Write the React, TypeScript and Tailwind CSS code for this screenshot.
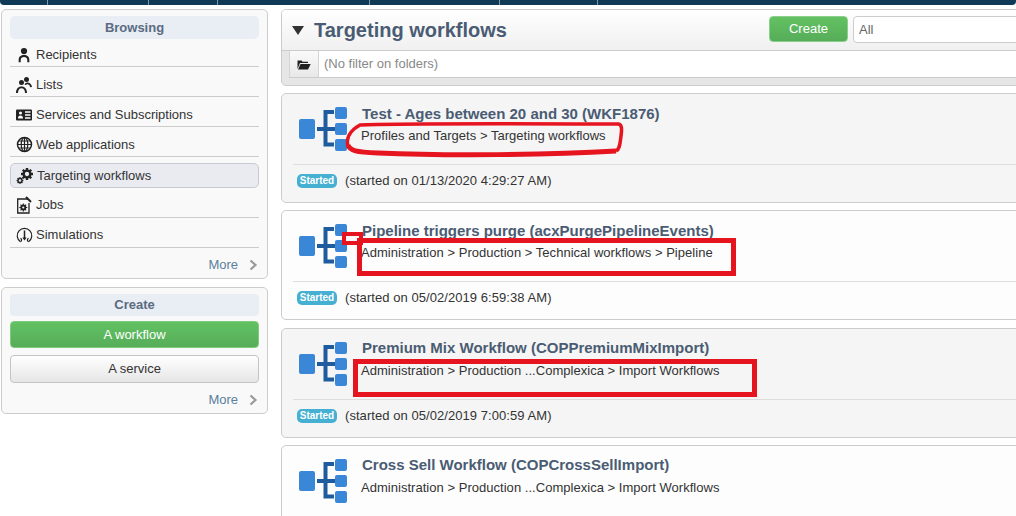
import React from "react";

const font = { fontFamily: '"Liberation Sans", Arial, sans-serif' };

function Person() {
  return (
    <svg width="16" height="17" viewBox="0 0 18 18" fill="#222">
      <circle cx="9" cy="4" r="3.500" />
      <path d="M3 16.500v-2.500C3 10.200 5.500 8.500 9 8.500s6 1.700 6 5.500v2.500h-2.300v-2.500C12.700 11.800 11 10.800 9 10.800s-3.700 1-3.700 3.200v2.500z" />
    </svg>
  );
}
function People() {
  return (
    <svg width="19" height="18" viewBox="0 0 19 18" fill="#222">
      <circle cx="11.500" cy="3.500" r="2.500" />
      <circle cx="6.500" cy="6.500" r="2.500" />
      <path d="M1 17c0-4 2.200-6.500 5.500-6.500S12 13 12 17h-2c0-2.700-1.300-4.700-3.500-4.700S3 14.300 3 17z" />
      <path d="M9.500 8.500c.6-1.300 1.500-2 3-2s3.800 1 4.500 4.500l-1.800.3c-.4-1.800-1.300-3-2.700-3-.7 0-1.300.2-1.600.7z" />
    </svg>
  );
}
function IdCard() {
  return (
    <svg width="18" height="14" viewBox="0 0 18 14">
      <rect x="1" y="1.500" width="16" height="11" rx="1" fill="#222" />
      <circle cx="5.500" cy="5" r="1.500" fill="#fff" />
      <path d="M3 10.500c0-2.200 1-3 2.500-3s2.500.8 2.500 3z" fill="#fff" />
      <path d="M10 4h5.500M10 7h5.500M10 10h5.500" stroke="#fff" strokeWidth="1.300" />
    </svg>
  );
}
function Globe() {
  return (
    <svg width="17" height="17" viewBox="0 0 17 17" fill="none" stroke="#222" strokeWidth="1.200">
      <circle cx="8.500" cy="8.500" r="7" strokeWidth="1.500" />
      <ellipse cx="8.500" cy="8.500" rx="3.300" ry="7" />
      <path d="M8.500 1.500v14M1.500 8.500h14M2.500 5h12M2.500 12h12" />
    </svg>
  );
}
function Gear({ size, cx, cy }: { size: number; cx: number; cy: number }) {
  const teeth = [0, 45, 90, 135];
  return (
    <g transform={`translate(${cx} ${cy})`}>
      {teeth.map((t) => (
        <rect key={t} x={-size * 0.2} y={-size} width={size * 0.4} height={size * 2} fill="#222" transform={`rotate(${t})`} />
      ))}
      <circle r={size * 0.76} fill="#222" />
      <circle r={size * 0.36} fill="#eceef3" />
    </g>
  );
}
function Gears() {
  return (
    <svg width="18" height="18" viewBox="0 0 18 18">
      <Gear size={6} cx={11} cy={7} />
      <Gear size={3.400} cx={4} cy={13.500} />
    </svg>
  );
}
function Doc() {
  return (
    <svg width="16" height="18" viewBox="0 0 16 18" fill="none">
      <path d="M12 3H1.700v14h11.300V7" stroke="#222" strokeWidth="1.300" />
      <path d="M10 1l5 5" stroke="#222" strokeWidth="2" />
      <g transform="translate(7.300 11.500)">
        <circle r="3" fill="#222" />
        <path d="M0-4v8M-4 0h8M-2.800-2.800l5.600 5.600M-2.800 2.800l5.600-5.600" stroke="#222" strokeWidth="1.100" />
        <circle r="1.100" fill="#f8f8f8" />
      </g>
    </svg>
  );
}
function Sim() {
  return (
    <svg width="17" height="18" viewBox="0 0 17 18" fill="none" stroke="#222" strokeWidth="1.200">
      <path d="M4.500 15.700A7.300 7.300 0 1 1 12.500 15.700" />
      <path d="M4.500 15.700c1.500-.7 1.500-2.500 0-3.500M12.500 15.700c-1.500-.7-1.500-2.500 0-3.500" />
      <path d="M8.500 4.500v8.500" strokeWidth="1.500" />
      <path d="M6.300 11.500h4.400L8.500 14.500z" fill="#222" stroke="none" />
    </svg>
  );
}
function Chevron() {
  return (
    <svg width="9" height="12" viewBox="0 0 9 12" fill="none" stroke="#999" strokeWidth="2.200">
      <path d="M1.500 1.500 6.500 6l-5 4.500" />
    </svg>
  );
}
function Folder() {
  return (
    <svg width="14" height="11" viewBox="0 0 14 11" fill="#222">
      <path d="M.5 10V1.500h4l1 1.200H11V4H3L.5 10z" />
      <path d="M3.500 5H13.700L11 10.500H1z" />
    </svg>
  );
}
function WorkflowIcon() {
  return (
    <svg width="50" height="46" viewBox="0 0 50 46" className="shrink-0">
      <rect x="1" y="12" width="16" height="20" rx="2" fill="#3987d6" />
      <rect x="37" y="0" width="12" height="12" rx="2" fill="#3987d6" />
      <rect x="37" y="16" width="12" height="12" rx="2" fill="#3987d6" />
      <rect x="37" y="32" width="12" height="12" rx="2" fill="#3987d6" />
      <path d="M36 5H27.500V37.500H36M19 22H37" fill="none" stroke="#1f5c9e" strokeWidth="4" />
    </svg>
  );
}

function NavRow({ icon, label, first, low }: { icon: React.ReactNode; label: string; first?: boolean; low?: boolean }) {
  return (
    <div className={first ? "h-[28px] flex items-center border-b border-[#cccccc] pt-[5px]" : low ? "h-[30px] flex items-center border-b border-[#cccccc] pt-[6px]" : "h-[30px] flex items-center border-b border-[#cccccc] pt-[4px]"}>
      <span className="w-[26px] flex justify-center pl-[2px] shrink-0">{icon}</span>
      <span className="text-[13px] text-[#333333]">{label}</span>
    </div>
  );
}

function More() {
  return (
    <div className="flex items-center justify-end gap-[11px] pr-[1px] text-[13px] text-[#5b7f9e]">
      <span>More</span>
      <Chevron />
    </div>
  );
}

function Card({ title, path, started, shade, gap, high }: { title: string; path: string; started?: string; shade?: boolean; gap?: boolean; high?: boolean }) {
  return (
    <div className={`h-[110px] shrink-0 ${gap ? "mb-[8px]" : "mb-[7px]"} border border-[#cccccc] rounded-[5px] ${shade ? "bg-[#f5f5f5]" : "bg-[#fdfdfd]"} px-[11px]`}>
      <div className="h-[71px] flex border-b border-[#dddddd] pt-[13px] pl-[5px]">
        <WorkflowIcon />
        <div className="pl-[13px]">
          <div className={`text-[15px] font-bold text-[#4a5c73] leading-[18px] ml-[1px] ${high ? "-mt-[3px]" : "-mt-[2px]"}`}>{title}</div>
          <div className={`text-[13px] tracking-[0.03px] text-[#333333] leading-[18px] ${high ? "mt-[5px]" : "mt-[4px]"}`}>{path}</div>
        </div>
      </div>
      {started && (
        <div className="flex items-center h-[32px] pl-[4px]">
          <span className="bg-[#46b0d2] text-white text-[10px] font-bold rounded-[5px] w-[40px] h-[14px] leading-[14px] text-center">Started</span>
          <span className="text-[13px] tracking-[0.06px] text-[#333333] ml-[8px]">{started}</span>
        </div>
      )}
    </div>
  );
}

export default function App() {
  return (
    <div className="relative w-[1016px] h-[516px] overflow-hidden bg-white flex flex-col" style={font}>
      <div className="h-[5px] shrink-0 flex bg-[#0e3a55] rounded-b-[4px]">
        <div className="w-[48px] border-r border-[#7f98a8]" />
        <div className="w-[101px] border-r border-[#7f98a8]" />
        <div className="w-[69px] border-r border-[#7f98a8]" />
        <div className="w-[152px] border-r border-[#7f98a8]" />
        <div className="w-[130px] border-r border-[#7f98a8]" />
        <div className="w-[98px] border-r border-[#7f98a8]" />
      </div>
      <div className="flex gap-[13px] pl-[1px] pt-[4px] items-start">
        <div className="w-[267px] shrink-0 flex flex-col gap-[8px]">
          <div className="h-[270px] border border-[#cccccc] rounded-[5px] bg-[#f9f9f9] px-[8px] pt-[6px]">
            <div className="h-[23px] rounded-[5px] bg-[#e9edf4] text-center text-[13px] font-bold leading-[23px] text-[#5a6b82]">Browsing</div>
            <NavRow first icon={<Person />} label="Recipients" />
            <NavRow low icon={<People />} label="Lists" />
            <NavRow low icon={<IdCard />} label="Services and Subscriptions" />
            <NavRow low icon={<Globe />} label="Web applications" />
            <div className="mt-[6px] h-[25px] flex items-center rounded-[5px] border border-[#c6cbd3] bg-[#e9ebf1]">
              <span className="w-[26px] flex justify-center pl-[1px] shrink-0"><Gears /></span>
              <span className="text-[13px] text-[#333333]">Targeting workflows</span>
            </div>
            <NavRow icon={<Doc />} label="Jobs" />
            <NavRow icon={<Sim />} label="Simulations" />
            <div className="mt-[7px]"><More /></div>
          </div>
          <div className="h-[127px] border border-[#cccccc] rounded-[5px] bg-[#f9f9f9] px-[8px] pt-[6px]">
            <div className="h-[22px] rounded-[4px] bg-[#e9edf4] text-center text-[13px] font-bold leading-[21px] text-[#5a6b82]">Create</div>
            <div className="mt-[5px] h-[27px] rounded-[4px] border border-[#7fca7f] bg-gradient-to-b from-[#62c162] to-[#56ad59] text-center text-[13px] leading-[25px] text-white">A workflow</div>
            <div className="mt-[7px] h-[28px] rounded-[4px] border border-[#c4c4c4] bg-gradient-to-b from-[#ffffff] to-[#e6e6e6] text-center text-[13px] leading-[25px] text-[#333333]">A service</div>
            <div className="mt-[7px]"><More /></div>
          </div>
        </div>
        <div className="w-[800px] shrink-0 flex flex-col">
          <div className="h-[77px] shrink-0 mb-[7px] border border-[#cccccc] rounded-[5px] bg-[#e6e6e6] flex flex-col overflow-hidden">
            <div className="h-[41px] shrink-0 flex items-center pl-[10px] bg-gradient-to-b from-[#ffffff] to-[#f0f0f0] border-b border-[#cccccc]">
              <svg width="12" height="9" viewBox="0 0 12 9" fill="#333"><path d="M0 0h12L6 9z" /></svg>
              <span className="ml-[10px] text-[20px] font-bold text-[#4a5c73]">Targeting workflows</span>
              <div className="ml-[262px] -mt-[2px] w-[79px] h-[26px] rounded-[4px] border border-[#8ad08a] bg-gradient-to-b from-[#62c162] to-[#56ad59] text-center text-[13px] leading-[24px] text-white">Create</div>
              <div className="ml-[5px] -mt-[1px] w-[200px] h-[27px] rounded-[4px] border border-[#cccccc] bg-white text-[13px] leading-[25px] text-[#666666] pl-[5px]">All</div>
            </div>
            <div className="h-[27px] shrink-0 flex bg-white border-b border-[#cccccc] ml-[7px]">
              <div className="w-[30px] flex items-center justify-center bg-gradient-to-b from-[#fafafa] to-[#e8e8e8] border-x border-[#d4d4d4]"><Folder /></div>
              <div className="pl-[5px] text-[13px] leading-[25px] text-[#888888]">(No filter on folders)</div>
            </div>
          </div>
          <Card shade title="Test - Ages between 20 and 30 (WKF1876)" path="Profiles and Targets > Targeting workflows" started="(started on 01/13/2020 4:29:27 AM)" />
          <Card gap title="Pipeline triggers purge (acxPurgePipelineEvents)" path="Administration > Production > Technical workflows > Pipeline" started="(started on 05/02/2019 6:59:38 AM)" />
          <Card shade high title="Premium Mix Workflow (COPPremiumMixImport)" path="Administration > Production ...Complexica > Import Workflows" started="(started on 05/02/2019 7:00:59 AM)" />
          <Card high title="Cross Sell Workflow (COPCrossSellImport)" path="Administration > Production ...Complexica > Import Workflows" />
        </div>
      </div>

      {/* Red hand-drawn annotations lying over the content */}
      <svg className="absolute left-[340px] top-[115px]" width="290" height="50" viewBox="0 0 290 50" fill="none" stroke="#e5141f">
        <path d="M8 31C6 24 9 16 20 10 60 8 230 9 278 9c4 0 4 5 3 12-1 7-1 13-5 15" strokeWidth="3.500" />
        <path d="M8 30c2 6 8 7 30 8 70 3 170 2 238-2" strokeWidth="5" />
      </svg>
      <div className="absolute left-[342px] top-[232px] w-[21px] h-[13px] border-[4px] border-[#e5141f] bg-[#f8f8f8]" />
      <div className="absolute left-[357px] top-[238px] w-[379px] h-[38px] border-[5px] border-[#e5141f]" />
      <div className="absolute left-[353px] top-[359px] w-[404px] h-[38px] border-[5px] border-[#e5141f]" />
    </div>
  );
}
